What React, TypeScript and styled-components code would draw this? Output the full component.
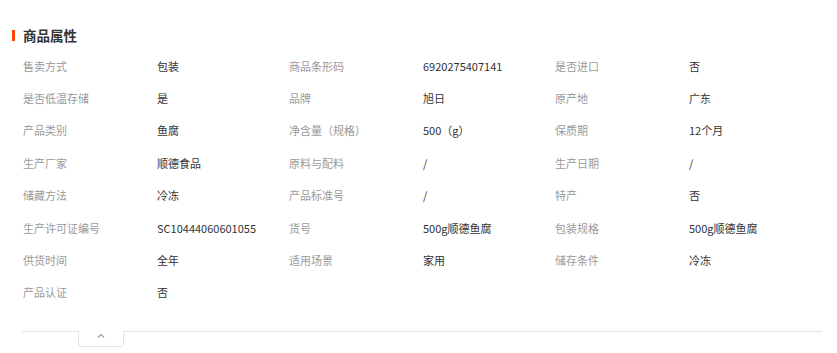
import React from "react";
import styled, { createGlobalStyle } from "styled-components";

const Global = createGlobalStyle`
  html, body { margin: 0; padding: 0; background: #fff; }
  body { font-family: "Noto Sans CJK SC", "Liberation Sans", sans-serif; }
`;

const Section = styled.section`
  width: 837px;
  padding: 25px 0 0 0;
  box-sizing: border-box;
`;

const Title = styled.h3`
  display: flex;
  align-items: center;
  gap: 8px;
  margin: 0 0 0 12px;
  height: 20px;
  font-size: 13.5px;
  font-weight: bold;
  color: #333;
  line-height: 20px;
  &::before {
    content: "";
    display: block;
    width: 3px;
    height: 11px;
    background: #ff4400;
    margin-top: 1px;
  }
`;

const Grid = styled.dl`
  display: grid;
  grid-template-columns: 134px 132px 134px 132px 134px 132px;
  grid-auto-rows: 32.43px;
  align-items: center;
  margin: 4.3px 0 0 23px;
  width: 798px;
  font-size: 11px;
  line-height: 14px;
`;

const Label = styled.dt`
  margin: 0;
  color: #9a9a9a;
  white-space: nowrap;
`;

const Value = styled.dd`
  margin: 0;
  color: #333;
  white-space: nowrap;
`;

const Footer = styled.div`
  position: relative;
  margin: 22.3px 15px 0 22px;
  border-top: 1px solid #e3e3e3;
  height: 22px;
`;

const Toggle = styled.button`
  position: absolute;
  left: 56px;
  top: -1px;
  width: 46px;
  height: 16px;
  box-sizing: border-box;
  border: 1px solid #e3e3e3;
  border-top: none;
  border-radius: 0 0 4px 4px;
  background: #fff;
  padding: 0;
  display: flex;
  justify-content: center;
  align-items: flex-start;
  padding-top: 2px;
  cursor: pointer;
`;

const rows: [string, string][] = [
  ["售卖方式", "包装"],
  ["商品条形码", "6920275407141"],
  ["是否进口", "否"],
  ["是否低温存储", "是"],
  ["品牌", "旭日"],
  ["原产地", "广东"],
  ["产品类别", "鱼腐"],
  ["净含量（规格）", "500（g）"],
  ["保质期", "12个月"],
  ["生产厂家", "顺德食品"],
  ["原料与配料", "/"],
  ["生产日期", "/"],
  ["储藏方法", "冷冻"],
  ["产品标准号", "/"],
  ["特产", "否"],
  ["生产许可证编号", "SC10444060601055"],
  ["货号", "500g顺德鱼腐"],
  ["包装规格", "500g顺德鱼腐"],
  ["供货时间", "全年"],
  ["适用场景", "家用"],
  ["储存条件", "冷冻"],
  ["产品认证", "否"],
];

export default function App() {
  return (
    <>
      <Global />
      <Section>
        <Title>商品属性</Title>
        <Grid>
          {rows.map(([k, v], i) => (
            <React.Fragment key={i}>
              <Label>{k}</Label>
              <Value>{v}</Value>
            </React.Fragment>
          ))}
        </Grid>
        <Footer>
          <Toggle aria-label="收起">
            <svg width="8" height="5" viewBox="0 0 8 5">
              <polyline points="1,4.5 4,1.5 7,4.5" fill="none" stroke="#9aa3b0" strokeWidth="1.2" />
            </svg>
          </Toggle>
        </Footer>
      </Section>
    </>
  );
}
